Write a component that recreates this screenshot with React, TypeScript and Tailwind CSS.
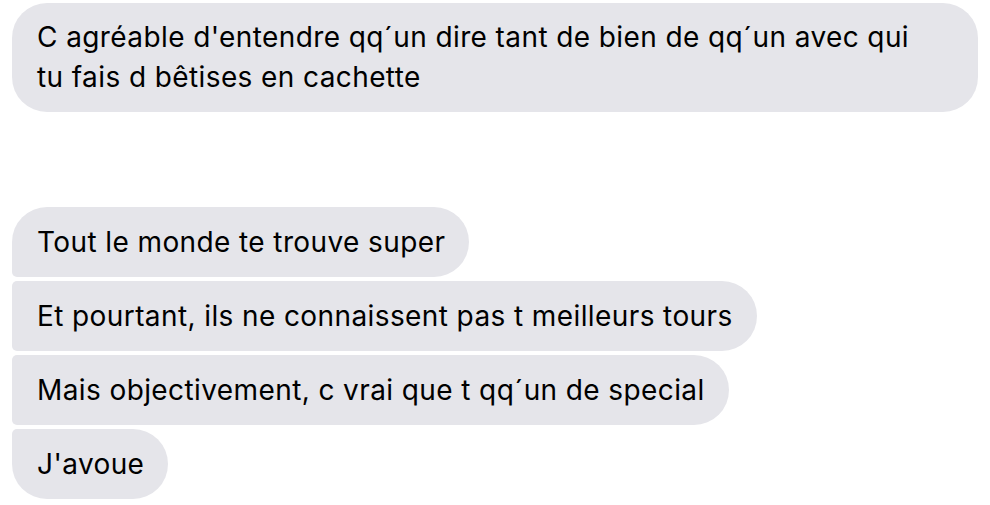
import React from "react";

const font = { fontFamily: "Inter, 'Noto Sans', sans-serif" };

function Bubble({ children, shape }: { children: React.ReactNode; shape: string }) {
  return (
    <div
      className={`self-start bg-[#e5e5ea] text-black text-[28px] leading-[38px] tracking-[0.4px] pl-[25px] pr-6 py-4 ${shape}`}
    >
      {children}
    </div>
  );
}

export default function App() {
  return (
    <div className="w-[990px] h-[505px] bg-white overflow-hidden pl-3 pt-[3px]" style={font}>
      <div className="flex flex-col">
        <div className="w-[966px] bg-[#e5e5ea] text-black text-[28px] leading-[40px] tracking-[0.4px] pl-[25px] pr-6 pt-[14px] pb-[15px] rounded-[35px]">
          C agréable d'entendre qq´un dire tant de bien de qq´un avec qui
          <br />
          tu fais d bêtises en cachette
        </div>

        <div className="flex flex-col gap-[4px] mt-[95px]">
          <Bubble shape="rounded-tl-[35px] rounded-bl-[5px] rounded-r-[35px]">Tout le monde te trouve super</Bubble>
          <Bubble shape="rounded-l-[5px] rounded-r-[35px]">Et pourtant, ils ne connaissent pas t meilleurs tours</Bubble>
          <Bubble shape="rounded-l-[5px] rounded-r-[35px]">Mais objectivement, c vrai que t qq´un de special</Bubble>
          <Bubble shape="rounded-tl-[5px] rounded-bl-[35px] rounded-r-[35px]">J'avoue</Bubble>
        </div>
      </div>
    </div>
  );
}
